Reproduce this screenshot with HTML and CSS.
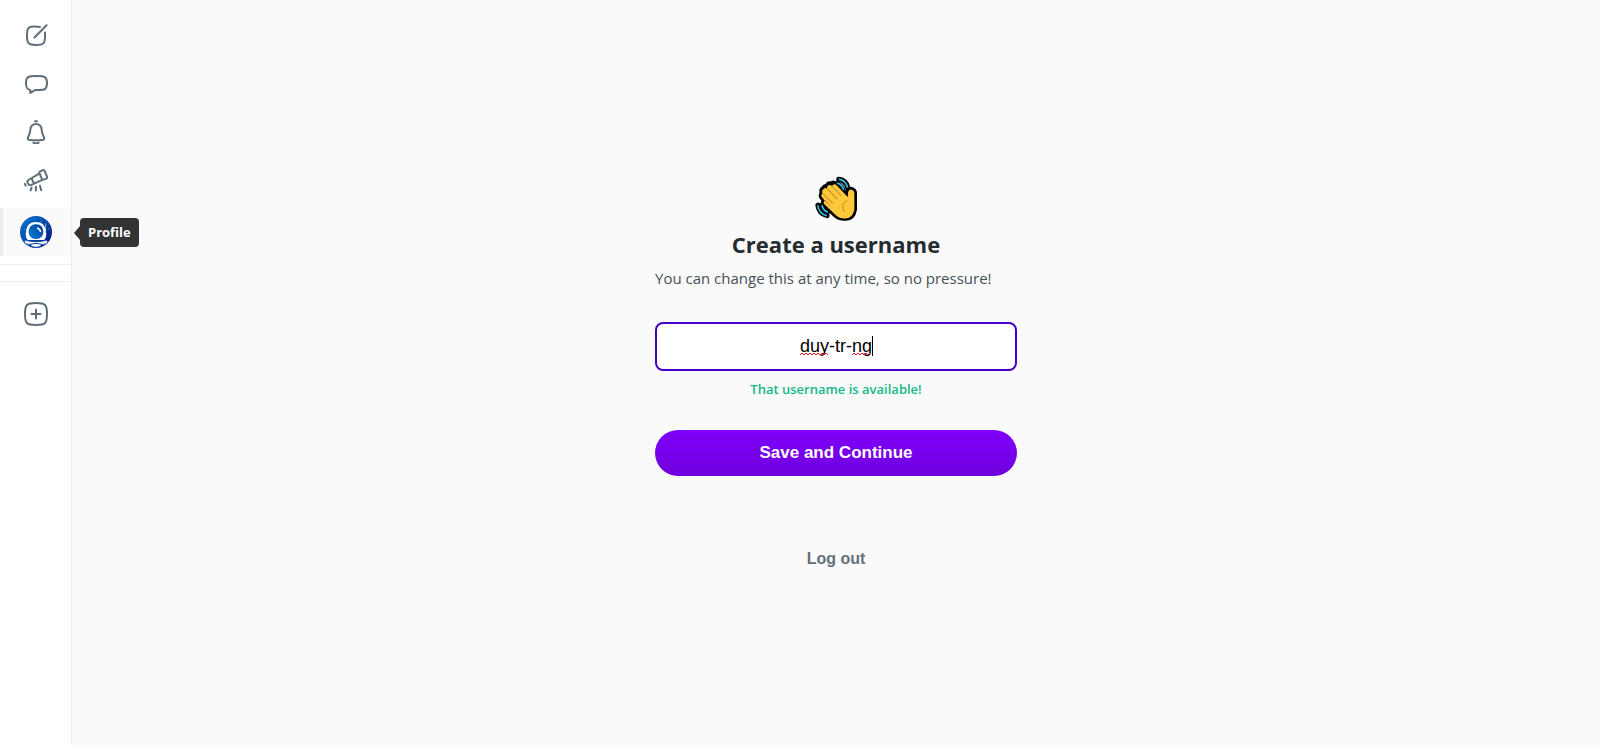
FILE: index.html
```html
<!DOCTYPE html>
<html lang="en">
<head>
<meta charset="utf-8">
<meta name="viewport" content="width=device-width, initial-scale=1">
<title>Create a username</title>
<link rel="stylesheet" href="styles.css">
</head>
<body>
<div class="app">
  <nav class="sidebar" aria-label="Main">
    <ul class="nav-list">
      <li><a class="nav-item" href="#compose" aria-label="New post">
        <svg class="icon" viewBox="0 0 24 24"><path d="M16 2.900C10 2.300 6.500 2.500 4.800 3.800C2.900 5.300 3 9 3 12C3 19.500 4.500 21 12 21C19.500 21 21 19.500 21 12.500V8.500"/><path d="M10.500 13.500L22.500 1.300"/></svg>
      </a></li>
      <li><a class="nav-item" href="#messages" aria-label="Messages">
        <svg class="icon" viewBox="0 0 24 24"><path d="M6.300 18C3 17.400 2 16 2 11.300C2 5.200 3.400 4.100 12.500 4.100C21.600 4.100 23 5.200 23 11.100C23 17 21.600 18.100 13 18.100H11L6.300 21Z"/></svg>
      </a></li>
      <li><a class="nav-item" href="#notifications" aria-label="Notifications">
        <svg class="icon" viewBox="0 0 24 24"><path d="M12 4C8.500 4 6.600 6.200 6.400 9.600C6.200 13 5.400 14.500 4.100 17.200C3.300 18.900 3.900 19.700 5.700 19.900Q12 20.500 18.300 19.900C20.100 19.700 20.700 18.900 19.900 17.200C18.600 14.500 17.800 13 17.600 9.600C17.400 6.200 15.500 4 12 4Z"/><path d="M11 1.200h2M9.400 22.700Q12 24.400 14.600 22.700"/></svg>
      </a></li>
      <li><a class="nav-item" href="#explore" aria-label="Explore">
        <svg class="icon" viewBox="0 0 24 24"><path d="M16.100 3.300L18.800 2.100Q20 1.600 20.600 2.900L23.100 8.700Q23.600 10 22.300 10.600L19.700 11.600Q18.400 12 17.800 10.700L15.400 5.200Q14.900 3.900 16.100 3.300ZM15.600 5.300L4.400 12Q2.900 13 3.600 14.700L4.300 16.200Q5 17.700 6.800 17.200L18.300 11.800M8 10.200Q7.900 13.300 10.600 15.200M.9 15.900L1.600 17.600M7.500 19.800L6.600 22.400M11.900 18.800V22.400M16 17.700L17.200 22.200"/></svg>
      </a></li>
    </ul>
    <a class="nav-item nav-item-active" href="#profile" aria-label="Profile" aria-describedby="tip">
      <svg class="avatar" viewBox="0 0 96 96">
        <defs>
          <linearGradient id="sky" x1="0" y1="0" x2="1" y2="1"><stop offset="0" stop-color="#0876d4"/><stop offset=".5" stop-color="#0448a8"/><stop offset="1" stop-color="#0b0878"/></linearGradient>
          <linearGradient id="visor" x1="0" y1="1" x2="1" y2="0"><stop offset="0" stop-color="#0580dc"/><stop offset="1" stop-color="#033d9b"/></linearGradient>
        </defs>
        <circle cx="48" cy="48" r="48" fill="url(#sky)"/>
        <path d="M77 22V44" stroke="#c9e2fb" stroke-width="2"/>
        <path d="M24 72C16 66 17 53 18 47C20 27 31 18 48 18C65 18 76 27 78 47C79 53 80 66 72 72Z" fill="#fff"/>
        <rect x="26" y="25" width="44" height="44" rx="20" fill="url(#visor)"/>
        <path d="M51 36Q60 38 62 48" fill="none" stroke="#fff" stroke-width="4"/>
        <path d="M14 77Q14 71 21 74Q48 81 75 74Q82 71 82 77L81 83Q48 91 15 83Z" fill="#fff" stroke="#0a48a6" stroke-width="2"/>
        <path d="M31 85Q48 79 65 85L61 92Q48 96 35 92Z" fill="#fff" stroke="#073f99" stroke-width="3"/>
        <path d="M25 15h3M43 11h3M61 16h3M85 38h3M12 40h3" stroke="#3ba2e6" stroke-width="3"/>
      </svg>
      <span class="tooltip" id="tip" role="tooltip">Profile</span>
    </a>
    <div class="divider"></div>
    <a class="nav-item" href="#new-community" aria-label="Create community">
      <svg class="icon" viewBox="0 0 24 24"><path d="M12 1C2.500 1 1 2.500 1 12S2.500 23 12 23S23 21.500 23 12S21.500 1 12 1ZM12 7.500V16.500M7.500 12H16.500"/></svg>
    </a>
  </nav>
  <main class="main">
    <form class="card">
      <svg class="wave" viewBox="43 30 130 138" aria-hidden="true">
        <g stroke="#000" stroke-width="16" stroke-linejoin="round" stroke-linecap="round" fill="none">
          <path d="M115 43Q137 46 142 68M108 57Q121 60 127 74M52 121Q56 146 79 152M64 121Q67 135 81 141"/>
          <path d="M70 70Q72 62 81 67Q81 53 92 58Q99 50 109 60L142 94L143 81Q146 70 154 74Q163 77 162 88V134Q157 161 135 160Q118 161 107 152L72 119Q65 112 72 106L66 99Q58 91 66 84Q61 73 70 70Z" fill="#000"/>
        </g>
        <path d="M115 42Q136 46 142 68M110 54Q125 57 130 75M51 121Q55 146 79 153M64 121Q67 137 82 142" fill="none" stroke="#35bfe8" stroke-width="5"/>
        <path d="M69 72Q73 66 80 72L79 67Q84 55 94 63Q101 53 109 61L142 96L143 82Q146 70 154 74Q163 77 162 88V134Q157 161 135 161Q118 162 107 152L72 119Q66 112 73 107L66 99Q58 91 66 85Q62 78 69 72Z" fill="#ffc83d"/>
        <path d="M80 71L110 101M94 63L121 91M67 86L97 114M74 108L86 119M140 108Q127 112 127 128Q127 134 132 139" fill="none" stroke="#d99a26" stroke-width="4" stroke-linecap="round"/>
      </svg>
      <h1 class="title"><label for="username">Create a username</label></h1>
      <p class="subtitle">You can change this at any time, so no pressure!</p>
      <div class="field">
        <input class="input" id="username" type="text" value="duy-tr-ng" spellcheck="false" autocomplete="off" aria-describedby="status">
        <svg class="marks" viewBox="0 0 74 20" aria-hidden="true">
          <path class="squiggle" d="M1 19l2-2l2 2l2-2l2 2l2-2l2 2l2-2l2 2l2-2l2 2l2-2l2 2l2-2l2 2M53 19l2-2l2 2l2-2l2 2l2-2l2 2l2-2l2 2l2-2"/>
          <path class="caret" d="M73.500 0V20"/>
        </svg>
      </div>
      <p class="status" id="status" role="status">That username is available!</p>
      <button class="save" type="submit">Save and Continue</button>
      <button class="logout" type="button">Log out</button>
    </form>
  </main>
</div>
</body>
</html>
```
FILE: styles.css
```css
* { box-sizing: border-box; }
body {
  margin: 0;
  background: #fafafa;
  font-family: "Open Sans", "Noto Sans", sans-serif;
  color: #242c30;
}
.app { display: flex; min-height: 100vh; }
.sidebar {
  width: 72px;
  flex: none;
  padding-top: 12px;
  background: #fff;
  border-right: 1px solid #ebeced;
}
.nav-list { list-style: none; margin: 0 0 4px; padding: 0; }
.nav-item {
  position: relative;
  display: flex;
  align-items: center;
  justify-content: center;
  height: 48px;
  color: #5f6e78;
}
.nav-item-active { background: #fafafa; }
.nav-item-active::before {
  content: "";
  position: absolute;
  inset: 0 auto 0 0;
  width: 3px;
  background: #ebeced;
}
.icon {
  width: 24px;
  height: 24px;
  fill: none;
  stroke: currentColor;
  stroke-width: 2;
  stroke-linejoin: round;
  stroke-linecap: round;
}
.avatar { width: 32px; height: 32px; }
.tooltip {
  position: absolute;
  left: 80px;
  top: 10px;
  padding: 5px 8px;
  border-radius: 4px;
  background: #333;
  color: #fff;
  font-size: 13px;
  font-weight: 700;
  line-height: 19px;
}
.tooltip::before {
  content: "";
  position: absolute;
  left: -6px;
  top: 8px;
  border: solid transparent;
  border-width: 7px 6px 7px 0;
  border-right-color: #333;
}
.divider {
  height: 18px;
  margin: 8px 0;
  border: solid #ebeced;
  border-width: 1px 0;
}
.main {
  flex: 1;
  display: flex;
  align-items: center;
  justify-content: center;
  padding: 24px;
}
.card {
  width: 100%;
  max-width: 362px;
  display: flex;
  flex-direction: column;
  align-items: center;
}
.wave { width: 43px; height: 46px; }
.title { margin: 5px 0 0; font-size: 22px; line-height: 36px; font-weight: 700; }
.subtitle {
  align-self: stretch;
  margin: 4px 0 0;
  font-size: 15px;
  line-height: 24px;
  color: #475057;
}
.field { position: relative; width: 100%; margin-top: 32px; }
.input {
  display: block;
  width: 100%;
  height: 49px;
  padding: 0 12px;
  border: 2px solid #4400c8;
  border-radius: 8px;
  background: #fff;
  color: #000;
  font: 18px "Liberation Sans", Arial, sans-serif;
  text-align: center;
  outline: none;
}
.marks {
  position: absolute;
  inset: 0;
  margin: auto;
  width: 74px;
  height: 20px;
  fill: none;
  pointer-events: none;
}
.squiggle { stroke: #f01020; }
.caret { stroke: #000; }
.status { margin: 8px 0 0; font-size: 13px; line-height: 20px; font-weight: 600; color: #15b789; }
.save, .logout {
  border: 0;
  font: 700 17px "Liberation Sans", Arial, sans-serif;
  cursor: pointer;
}
.save {
  width: 100%;
  height: 46px;
  margin-top: 31px;
  border-radius: 23px;
  background: linear-gradient(#7f00fa, #7000de);
  color: #fff;
}
.logout { height: 24px; margin-top: 71px; padding: 0 12px; background: none; color: #647078; font-size: 16px; }
```
